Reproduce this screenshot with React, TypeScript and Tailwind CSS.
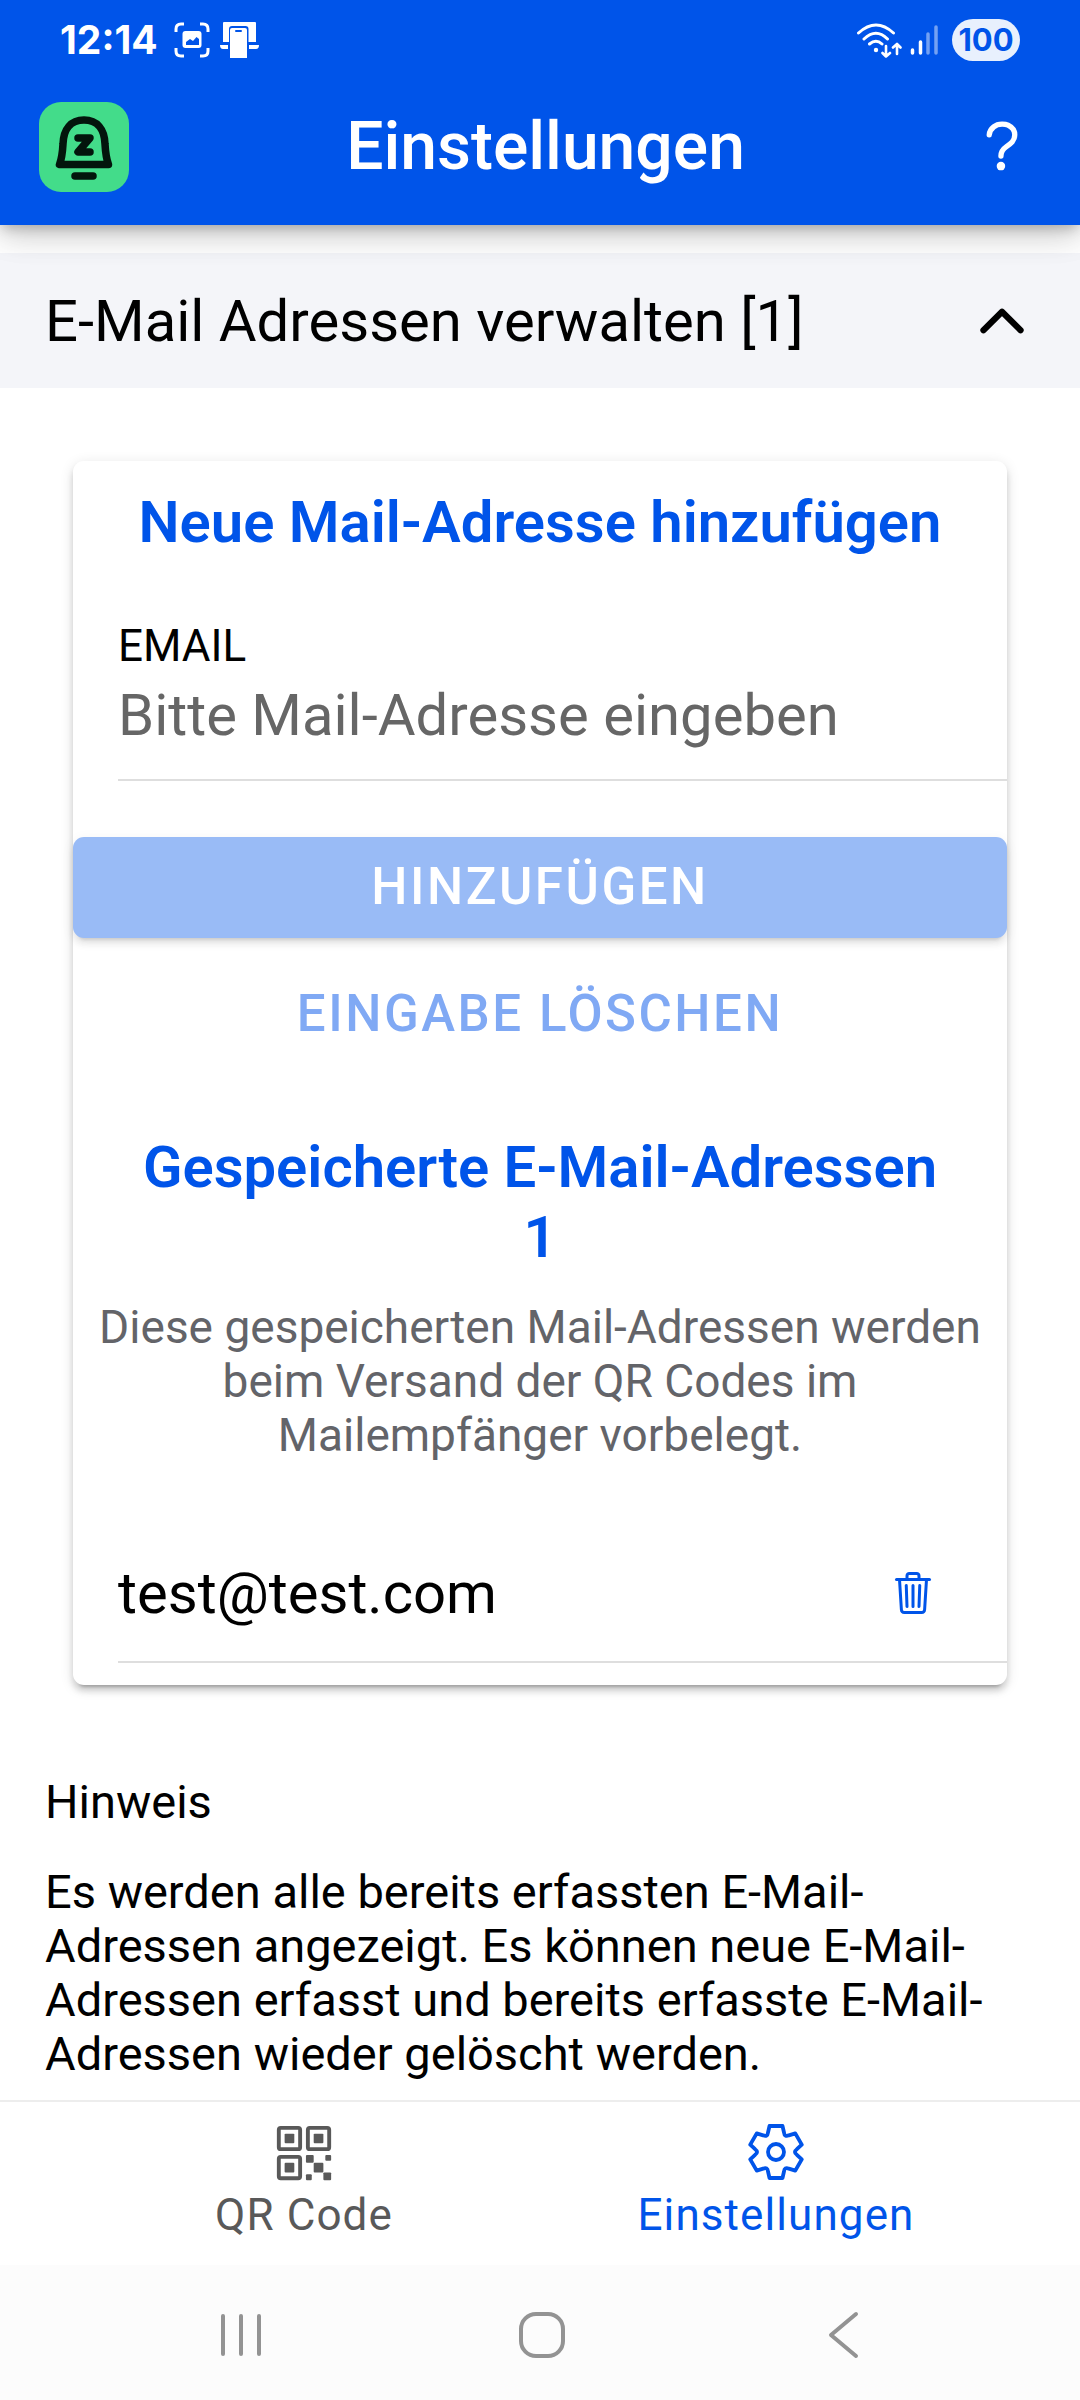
import { useState } from "react";
import {
  IoChevronUp,
  IoHelpOutline,
  IoQrCodeOutline,
  IoTrashOutline,
} from "react-icons/io5";

function rotate(x: number, y: number, degrees: number) {
  const a = (degrees * Math.PI) / 180;
  const rx = x * Math.cos(a) - y * Math.sin(a);
  const ry = x * Math.sin(a) + y * Math.cos(a);
  return `${rx.toFixed(2)} ${ry.toFixed(2)}`;
}

const gearPath =
  [0, 60, 120, 180, 240, 300]
    .map(
      (d, i) =>
        `${i === 0 ? "M" : "L"}${rotate(-6.5, -26, d)} L${rotate(6.5, -26, d)} L${rotate(8, -19.5, d)} Q${rotate(8.5, -14.7, d)} ${rotate(-8, -19.5, d + 60)}`,
    )
    .join(" ") + " Z";

function GearIcon() {
  return (
    <svg viewBox="-28 -28 56 56" className="size-14" fill="none" stroke="currentColor" strokeWidth="3.8" strokeLinejoin="round" aria-hidden="true">
      <path d={gearPath} />
      <circle r="8" />
    </svg>
  );
}

function AppLogo() {
  return (
    <svg viewBox="0 0 90 90" className="size-[90px]" aria-hidden="true">
      <rect width="90" height="90" rx="22" fill="#43dc8a" />
      <g fill="none" stroke="#03150c" strokeLinecap="round" strokeLinejoin="round">
        <path strokeWidth="7.500" d="M20.500 62.500H69.500C67 56 66.500 51 66 42C65.500 27 58 18 45 18S24.500 27 24 42C23.500 51 23 56 20.500 62.500Z" />
        <path strokeWidth="7.500" d="M39 36H51L39 50H51" />
        <path strokeWidth="7.500" d="M36 74H54" />
      </g>
    </svg>
  );
}

function StatusBar() {
  return (
    <div className="flex h-[69px] items-center justify-between pt-[11px] pr-[60px] pl-[60px]">
      <div className="flex items-center">
        <span className="font-[Inter,sans-serif] text-[39px] leading-10 font-bold">12:14</span>
        <svg viewBox="0 0 36 36" className="ml-4 size-9" aria-hidden="true">
          <path d="M2 10V7Q2 2 7 2H10M26 2H29Q34 2 34 7V10M34 26V29Q34 34 29 34H26M10 34H7Q2 34 2 29V26" fill="none" stroke="currentColor" strokeWidth="3" strokeLinecap="butt" />
          <rect x="8.500" y="9" width="19" height="17" rx="3" fill="currentColor" />
          <path d="M12 23V20L16 17L19 19L22.500 15L25 17V23Z" fill="#0054e9" />
        </svg>
        <svg viewBox="0 0 39 38" className="ml-2.5 h-[38px] w-[39px]" aria-hidden="true">
          <path d="M3 2Q3 1 4 1H35Q36 1 36 2V21H28.500V8Q28.500 5 25.500 5H12Q9 5 9 8V21H3ZM0 24H8V28H3Q0 28 0 24ZM29 24H39Q39 28 36 28H29Z" fill="currentColor" />
          <path d="M10 9Q10 7 12 7H25Q27 7 27 9V37H10Z" fill="currentColor" />
          <rect x="15" y="9" width="7" height="2" rx="1" fill="#0054e9" />
        </svg>
      </div>
      <div className="flex items-center">
        <svg viewBox="0 0 46 36" className="h-9 w-[46px]" fill="none" stroke="currentColor" strokeWidth="3" strokeLinecap="round" strokeLinejoin="round" aria-hidden="true">
          <path d="M2.500 11Q20 -5 37.500 11M8 17Q20 5.500 31.500 17M13.500 22Q20 16.500 26 22" />
          <circle cx="20" cy="28" r="2.200" fill="currentColor" stroke="none" />
          <path strokeWidth="2.600" d="M30 24V34M26.500 31L30 34.500L34 31M41 32V22M37 25.500L41 22L44.500 25.500" />
        </svg>
        <svg viewBox="0 0 28 32" className="ml-2 h-8 w-7" fill="none" stroke="currentColor" strokeWidth="3.500" strokeLinecap="round" aria-hidden="true">
          <path d="M2.500 26V29M10.500 18V29" />
          <path d="M18 10V29M26 3V29" opacity="0.450" />
        </svg>
        <span className="ml-3.5 flex h-[42px] w-[68px] items-center justify-center rounded-full bg-[#e8f0fd] font-[Inter,sans-serif] text-[31px] font-bold text-[#0054e9]">100</span>
      </div>
    </div>
  );
}

export default function App() {
  const [email, setEmail] = useState("");
  return (
    <div className="flex min-h-screen flex-col bg-white font-[Roboto,sans-serif] text-[46px] leading-[54px] text-black">
      <header className="relative bg-[#0054e9] text-white shadow-[0_6px_11px_-3px_rgba(0,0,0,0.2),0_11px_28px_0_rgba(0,0,0,0.14),0_3px_39px_0_rgba(0,0,0,0.12)]">
        <StatusBar />
        <div className="flex h-[156px] items-center justify-between pr-11 pl-[39px]">
          <AppLogo />
          <h1 className="pr-1.5 text-[66px] leading-[78px] font-medium">Einstellungen</h1>
          <button type="button" aria-label="Hilfe">
            <IoHelpOutline className="size-[68px]" />
          </button>
        </div>
      </header>

      <main className="flex-1 pt-7">
        <button type="button" aria-expanded="true" className="flex h-[135px] w-full items-center justify-between bg-[#f4f5f9] px-[45px] text-left text-[58px] leading-[70px]">
          <span>E-Mail Adressen verwalten [1]</span>
          <IoChevronUp className="size-[66px]" />
        </button>

        <section className="mx-[73px] mt-[73px] rounded-[11px] pb-[22px] shadow-[0_8px_3px_-6px_rgba(0,0,0,0.2),0_6px_6px_0_rgba(0,0,0,0.14),0_3px_14px_0_rgba(0,0,0,0.12)]">
          <h2 className="px-14 pt-[26px] text-center text-[58px] leading-[70px] font-semibold text-[#0054e9]">Neue Mail-Adresse hinzufügen</h2>
          <div className="mt-[62px] ml-[45px] border-b-2 border-[#dedede]">
            <label htmlFor="email" className="block text-[44px] leading-[54px]">EMAIL</label>
            <input
              id="email"
              type="email"
              value={email}
              onChange={(e) => setEmail(e.target.value)}
              placeholder="Bitte Mail-Adresse eingeben"
              className="mb-[22px] block h-[84px] w-full bg-transparent text-[58px] outline-none placeholder:text-[#666666]"
            />
          </div>
          <button type="button" disabled className="mt-14 block h-[101px] w-full rounded-[11px] bg-[#99bbf6] pb-0.5 text-[51px] font-medium tracking-wider text-white shadow-[0_8px_3px_-6px_rgba(0,0,0,0.1),0_6px_6px_0_rgba(0,0,0,0.07),0_3px_14px_0_rgba(0,0,0,0.06)]">
            HINZUFÜGEN
          </button>
          <button type="button" disabled className="mt-[26px] block h-[101px] w-full pb-0.5 text-[51px] font-medium tracking-wider text-[#80a9f4]">
            EINGABE LÖSCHEN
          </button>
          <h2 className="mt-[67px] px-14 text-center text-[58px] leading-[70px] font-semibold text-[#0054e9]">
            Gespeicherte E-Mail-Adressen 1
          </h2>
          <p className="mt-7 px-5 text-center text-[#636469]">
            Diese gespeicherten Mail-Adressen werden beim Versand der QR Codes im Mailempfänger vorbelegt.
          </p>
          <div className="mt-[63px] ml-[45px] flex h-[138px] items-center justify-between border-b-2 border-[#dedede] pr-[70px]">
            <span className="text-[58px] leading-[70px]">test@test.com</span>
            <button type="button" aria-label="Löschen" className="text-[#0054e9]">
              <IoTrashOutline className="size-[48px]" />
            </button>
          </div>
        </section>

        <div className="px-[45px] pt-[90px] pb-2.5 text-[47px]">
          <p>Hinweis</p>
          <p className="mt-9">
            Es werden alle bereits erfassten E-Mail-Adressen angezeigt. Es können neue E-Mail-Adressen erfasst und bereits erfasste E-Mail-Adressen wieder gelöscht werden.
          </p>
        </div>
      </main>

      <nav className="flex h-[165px] justify-center border-t-2 border-[#ededed] text-[44px] tracking-wide">
        <a href="#qr" className="flex max-w-[472px] flex-1 flex-col items-center gap-1 pt-5 text-[#595959]">
          <IoQrCodeOutline className="size-[62px]" />
          QR Code
        </a>
        <a href="#einstellungen" aria-current="page" className="flex max-w-[472px] flex-1 flex-col items-center gap-2 pt-[22px] text-[#0054e9]">
          <GearIcon />
          Einstellungen
        </a>
      </nav>

      <div className="bg-[#fcfcfc] pl-1 text-[#939393]">
        <div className="mx-auto flex h-[135px] w-[84%] items-center justify-around pt-1">
          <button type="button" aria-label="Letzte Apps">
            <svg viewBox="0 0 48 48" className="size-12" stroke="currentColor" strokeWidth="4" strokeLinecap="round">
              <path d="M6 5V43M24 5V43M42 5V43" />
            </svg>
          </button>
          <button type="button" aria-label="Startbildschirm">
            <svg viewBox="0 0 48 48" className="size-12" fill="none" stroke="currentColor" strokeWidth="4">
              <rect x="3" y="3" width="42" height="42" rx="15" />
            </svg>
          </button>
          <button type="button" aria-label="Zurück">
            <svg viewBox="0 0 48 48" className="size-12" fill="none" stroke="currentColor" strokeWidth="4" strokeLinecap="round" strokeLinejoin="round">
              <path d="M37 3L12 24L37 45" />
            </svg>
          </button>
        </div>
      </div>
    </div>
  );
}
